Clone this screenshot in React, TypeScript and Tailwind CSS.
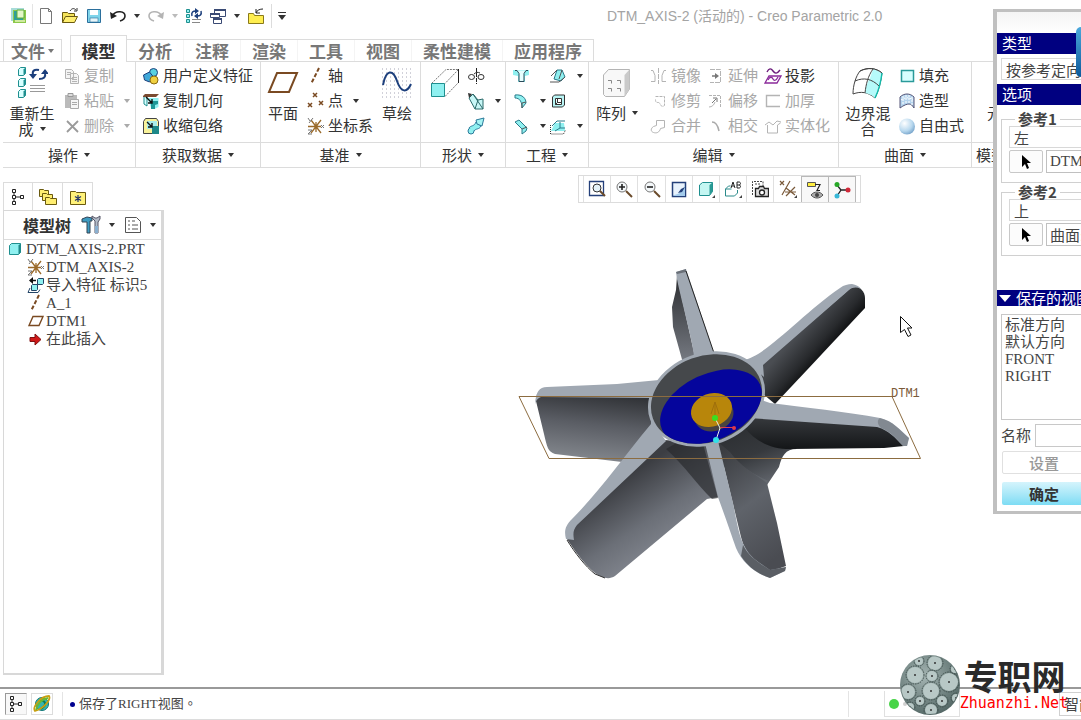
import type { ReactNode } from 'react';

const CY = '#8ff0f0';
const TEAL = '#1f8f8f';
const NAVY = '#1c3f7c';
const BROWN = '#7a4a22';
const GREY = '#b4b4b4';

interface SvgProps {
  w?: number;
  h?: number;
  box?: string;
  children: ReactNode;
}

function Svg({ w = 18, h = 18, box, children }: SvgProps) {
  return (
    <svg width={w} height={h} viewBox={box ?? `0 0 ${w} ${h}`} fill="none" className="shrink-0" aria-hidden="true">
      {children}
    </svg>
  );
}

function Caret({ color = '#333' }: { color?: string }) {
  return (
    <Svg w={6} h={4}>
      <path d="M0 0h6L3 4z" fill={color}/>
    </Svg>
  );
}

/* ---------- icons ---------- */

const icons = {
  logo: (
    <Svg>
      <path d="M1 1h13v2H3v11H1z" fill="#a8dcd8"/>
      <path d="M3 3h13v13H3z" fill="#8cc84a"/>
      <path d="M4 4h9v9H4z" fill="#2f9e9a"/>
      <path d="M7 3h7v8H7z" fill="#e4f6c8" stroke="#5fae3a"/>
      <path d="M5 13h10v2H5z" fill="#cfeaa0"/>
    </Svg>
  ),
  page: (
    <Svg>
      <path d="M3.500 1.500h8l3 3v12h-11z" fill="#fff" stroke="#777"/>
      <path d="M11.500 1.500v3h3" stroke="#777"/>
    </Svg>
  ),
  open: (
    <Svg>
      <path d="M1.500 15.500v-10h5l1 1h6v3" fill="#f4e35a" stroke="#6b5a10"/>
      <path d="M1.500 15.500l3-6h12l-3 6z" fill="#ffef70" stroke="#6b5a10"/>
      <path d="M9 4c2-3 4-3 6-1M16 1v3h-3" stroke="#333"/>
    </Svg>
  ),
  save: (
    <Svg>
      <path d="M2.500 2.500h13v13h-13z" fill="#7fd4ea" stroke="#2b6f9c"/>
      <rect x="5" y="3" width="8" height="5" fill="#fff"/>
      <rect x="5" y="11" width="8" height="4" fill="#e8f6fa" stroke="#2b6f9c" strokeWidth=".6"/>
    </Svg>
  ),
  undo: (
    <Svg>
      <path d="M4 8c3-5 12-4 12 1 0 2-2 4-5 5" stroke="#222" strokeWidth="1.600"/>
      <path d="M1 5l1 7 6-3z" fill="#222"/>
    </Svg>
  ),
  redo: (
    <Svg>
      <path d="M14 8C11 3 2 4 2 9c0 2 2 4 5 5" stroke={GREY} strokeWidth="1.600"/>
      <path d="M17 5l-1 7-6-3z" fill={GREY}/>
    </Svg>
  ),
  regen: (
    <Svg>
      <path d="M1.500 2.500h3v3h-3zM1.500 7.500h3v3h-3zM1.500 12.500h3v3h-3z" fill={CY} stroke={TEAL}/>
      <path d="M7 12.500h9M7 15.500h8" stroke="#888"/>
      <path d="M7 9c-1-4 1-5 4-5M16 4c1 4-1 5-4 5" stroke={NAVY} strokeWidth="1.500"/>
      <path d="M10 1l4 3-4 3zM13 12L9 9l4-3z" fill={NAVY}/>
    </Svg>
  ),
  windows: (
    <Svg>
      <path d="M5.500 2.500h11v7h-11z" fill="#fff" stroke="#3a4a74"/>
      <path d="M5 2h12v2H5z" fill="#3a4a74"/>
      <path d="M1.500 6.500h9v4h-9z" fill="#fff" stroke="#3a4a74"/>
      <path d="M1 6h10v2H1z" fill="#3a4a74"/>
      <path d="M4.500 11.500h8v5h-8z" fill="#fff" stroke="#3a4a74"/>
      <path d="M4 11h9v2H4z" fill="#3a4a74"/>
    </Svg>
  ),
  folder: (
    <Svg>
      <path d="M1.500 16.500v-10h5l1 2h9v8z" fill="#ffee50" stroke="#8a7a1a"/>
      <path d="M9 6c1-3 4-4 7-4M9 2v4h4" stroke="#222"/>
    </Svg>
  ),
  regenBig: (
    <Svg w={32} h={32}>
      {[1, 12, 23].map(y => (
        <g key={y}>
          <path d={`M2.500 ${y + 1.5}l2-2h5v6l-2 2h-5z`} fill="#d8ffff" stroke={TEAL}/>
          <path d={`M7.500 ${y + 7}v-5.500l2-2v6z`} fill={TEAL}/>
        </g>
      ))}
      <path d="M14 18.500h15M14 21.500h15M14 24.500h15" stroke="#999"/>
      <path d="M17 8c-1-4 1-6 6-5M29 6c1 4-1 6-6 6" stroke={NAVY} strokeWidth="2"/>
      <path d="M13 7h8l-4 5zM25 7h8l-4-5z" fill={NAVY}/>
    </Svg>
  ),
  copy: (
    <Svg>
      <path d="M2.500 2.500h6l2 2v7h-8zM7.500 6.500h6l2 2v8h-8z" fill="#f4f4f4" stroke={GREY}/>
      <path d="M9 10.500h5M9 12.500h5M9 14.500h5M4 5.500h4M4 7.500h3" stroke={GREY}/>
    </Svg>
  ),
  paste: (
    <Svg>
      <path d="M2 3h12v13H2z" fill="#bbb"/>
      <path d="M5 1.500h5v3H5z" fill="#ddd" stroke="#999"/>
      <path d="M7.500 7.500h8v9h-8z" fill="#f6f6f6" stroke="#aaa"/>
      <path d="M9 10.500h5M9 12.500h5" stroke="#aaa"/>
    </Svg>
  ),
  remove: (
    <Svg>
      <path d="M4 4l11 11M15 4L4 15" stroke="#9a9a9a" strokeWidth="1.800"/>
    </Svg>
  ),
  udf: (
    <Svg>
      <circle cx="11.500" cy="5.500" r="4" fill="#58d0e0" stroke={NAVY}/>
      <path d="M1.500 8l6-3 4 5-4 5-5-2z" fill="#3fa8d8" stroke={NAVY}/>
      <circle cx="12" cy="13" r="4" fill="#f0d040" stroke="#8a6a10"/>
    </Svg>
  ),
  copyGeom: (
    <Svg>
      <path d="M5.500 6h11v9l-4 2h-3z" fill={CY}/>
      <path d="M2 4h3v10l-3-2z" fill="#d8ffff" stroke={TEAL}/>
      <path d="M1 4l2-2h14l-3 3H1z" fill="#7a4a30"/>
      <path d="M9 9h7v3l-3 1v4H9z" fill="#1d9898"/>
      <path d="M4 5l6 6M10 7v4H6" stroke="#111" strokeWidth="1.400"/>
    </Svg>
  ),
  shrink: (
    <Svg>
      <path d="M1.500 4.500l2-3h11l2 3v12h-15z" fill="#f8f29a" stroke="#444"/>
      <path d="M5 4h10v8H5z" fill="#a8ecec"/>
      <path d="M10 9h7v8h-7z" fill="#1d8888"/>
      <path d="M5 5l5 5M10 6v4H6" stroke="#111" strokeWidth="1.400"/>
    </Svg>
  ),
  plane: (
    <Svg w={32} h={32}>
      <path d="M10 6h20l-8 19H2z" fill="#fff" stroke={BROWN} strokeWidth="2"/>
    </Svg>
  ),
  axis: (
    <Svg>
      <path d="M12 1L4 17" stroke={BROWN} strokeWidth="2" strokeDasharray="4 2"/>
    </Svg>
  ),
  points: (
    <Svg>
      <path d="M6 1l4 4m0-4L6 5M1 11l4 4m0-4l-4 4M12 9l4 4m0-4l-4 4" stroke={BROWN} strokeWidth="1.500"/>
    </Svg>
  ),
  csys: (
    <Svg>
      <path d="M1 9.500h13M4 3l10 13M14 3L4 16M9 5v10" stroke="#9a6a2a" strokeWidth="1.300"/>
      <path d="M1 1l2 3m3-3L2 6M1 13h4l-4 4h4M14 8l3 3m0-3l-3 3" stroke="#777"/>
    </Svg>
  ),
  sketch: (
    <Svg w={32} h={32}>
      {[2, 6, 10, 14, 18, 22, 26, 30].map(y => (
        <path key={y} d={`M1 ${y}h30`} stroke="#a4a4b4" strokeDasharray="1 3"/>
      ))}
      <path d="M2 18C5 2 12 2 16 14s10 12 14 3" stroke={NAVY} strokeWidth="2"/>
    </Svg>
  ),
  extrude: (
    <Svg w={32} h={32}>
      <path d="M2.500 16.500L17 2.500h12.500L16 16.500" stroke="#777" strokeDasharray="2 1"/>
      <path d="M16 29.500l13.500-14v-13" stroke="#777" strokeDasharray="2 1"/>
      <path d="M29.500 2v14" stroke="#222"/>
      <path d="M2.500 16.500h13v13h-13z" fill={CY} stroke={TEAL}/>
    </Svg>
  ),
  revolve: (
    <Svg>
      <path d="M9.500 1v16" stroke="#222" strokeDasharray="4 1"/>
      <ellipse cx="4.500" cy="10" rx="3" ry="2.500" stroke="#333"/>
      <ellipse cx="14" cy="10" rx="3" ry="2.500" stroke="#333"/>
      <path d="M7 7c2-2 4-2 6-1" stroke="#333"/>
    </Svg>
  ),
  sweep: (
    <Svg>
      <path d="M2 6l4-4 5 6 5-1v10H8z" fill="#c8f6f6" stroke="#2b6a6a"/>
      <path d="M8 17l3-9M16 17L6 2" stroke="#2b6a6a"/>
      <path d="M1 1l4 1-3 4z" fill="#333"/>
    </Svg>
  ),
  blend: (
    <Svg>
      <circle cx="4" cy="14" r="3" fill={CY} stroke="#2b7a9a"/>
      <path d="M2 11c2-3 5-1 7-6l5 4c-2 4-5 2-7 5" fill={CY} stroke="#2b7a9a"/>
      <path d="M9 3l8-2-2 8-5-2z" fill="#a6f4f4" stroke="#2b7a9a"/>
    </Svg>
  ),
  hole: (
    <Svg>
      <path d="M1 3h16v5l-4 1v6H6V9L1 8z" fill={CY}/>
      <path d="M3 3.500h2l2 3v8h5v-8l2-3h2" fill="#e6ffff" stroke="#2b4a5a"/>
    </Svg>
  ),
  draft: (
    <Svg>
      <path d="M5 12l3-9h5l3 7-4 4z" fill={CY} stroke="#2b7a8a"/>
      <path d="M2 9l6-6M13 3l-3 9M1 15h9l6-5" stroke="#555"/>
    </Svg>
  ),
  round: (
    <Svg>
      <path d="M3 3c8-1 11 4 11 8l-4 5c0-6-2-10-7-10z" fill={CY} stroke="#2b7a8a"/>
      <path d="M10 16v-5l4-1" stroke="#555"/>
    </Svg>
  ),
  shell: (
    <Svg>
      <path d="M3.500 5l2-2h10v10l-2 2h-10z" fill="#b8f4f4" stroke="#333"/>
      <path d="M6.500 6.500h6v6h-6zM6.500 12.500l2-2v-4M8.500 10.500h4" fill="#fff" stroke="#333"/>
    </Svg>
  ),
  chamfer: (
    <Svg>
      <path d="M3 5l4-2 8 8-1 3-4 3v-5z" fill={CY} stroke="#2b7a8a"/>
      <path d="M10 12l5-2" stroke="#555"/>
    </Svg>
  ),
  rib: (
    <Svg>
      <path d="M2 14l4-8h9l1 8z" fill={CY}/>
      <path d="M3 9l5-5h8M6 14l5-3V5M11 11h5" stroke="#2b7a8a"/>
      <path d="M1.500 8v9h13l2-4" stroke="#333" strokeDasharray="1 1"/>
    </Svg>
  ),
  pattern: (
    <Svg w={32} h={32}>
      <path d="M2.500 8l5-5.500h21V22l-5 7.500h-19l-2-2z" fill="#f8f8f8" stroke={GREY}/>
      <path d="M23.500 8l5-5.500V22l-5 7.500z" fill="#cacaca"/>
      <path d="M7 13.500h3.500v3M16 13.500h3.500v3M7 21.500h3.500v3M16 21.500h3.500v3" stroke="#888"/>
    </Svg>
  ),
  mirror: (
    <Svg>
      <path d="M8.500 1v16" stroke={GREY} strokeDasharray="5 1"/>
      <path d="M1 3.500h2l2 5v6M16 3.500h-2l-2 5v6M1 14.500h4M12 14.500h4" stroke={GREY}/>
    </Svg>
  ),
  trim: (
    <Svg>
      <path d="M5.500 4.500h9v9c-4 3-4-3-6-3s-3 0-3-3" stroke={GREY} strokeDasharray="3 1"/>
    </Svg>
  ),
  merge: (
    <Svg>
      <path d="M6.500 3.500h8v7l-4 1c-1 4-4 5-7 4s-3-4 0-6l3-1z" stroke={GREY}/>
    </Svg>
  ),
  extend: (
    <Svg>
      <path d="M3 2.500h10.500v13H3" stroke={GREY} strokeDasharray="5 1"/>
      <path d="M5 9h4" stroke="#777" strokeWidth="1.500"/>
      <path d="M8 6v6l4-3z" fill="#777"/>
    </Svg>
  ),
  offset: (
    <Svg>
      <path d="M2 3.500h11.500v12" stroke={GREY} strokeDasharray="3 1"/>
      <path d="M5 11l4-4M6 6h4v4" stroke="#777"/>
      <path d="M2 15c3 0 5-2 6-5" stroke={GREY}/>
    </Svg>
  ),
  intersect: (
    <Svg>
      <path d="M5 5c4 0 6 4 7 9" stroke="#aaa" strokeWidth="1.500"/>
    </Svg>
  ),
  project: (
    <Svg>
      <path d="M3 5c2-4 4-4 6-1s4 3 7-1" stroke="#6a1a7a" strokeWidth="1.400"/>
      <path d="M1 16l4-7h12l-4 7z" stroke="#8a2a9a" strokeWidth="1.300"/>
      <path d="M4 13c2-4 4-3 5-1s3 2 5-2" stroke="#8a2a9a" strokeWidth="1.300"/>
    </Svg>
  ),
  thicken: (
    <Svg>
      <path d="M16 3.500H2.500v11H16" stroke={GREY} strokeWidth="1.400"/>
    </Svg>
  ),
  solidify: (
    <Svg>
      <path d="M1 8l4-3 4 3 4-4 4 1M3.500 8v8h10V8l3-2" stroke={GREY}/>
    </Svg>
  ),
  boundary: (
    <Svg w={36} h={32}>
      <path d="M10 4c8-4 16-3 22 2-1 8-3 17-7 25-7-6-14-7-22-4 0-9 3-18 7-23z" fill="#fff" stroke="#444"/>
      <path d="M20 11L23 2c4 1 7 3 9 4-1 8-3 17-7 25-3-3-6-4-10-5 0-5 2-10 5-15z" fill="#b6fafa"/>
      <path d="M5 14c9-4 17-2 24 5M23 2c-5 7-7 15-8 24M10 4c8-4 16-3 22 2" stroke="#444"/>
      <path d="M32 6c-1 8-3 17-7 25" stroke="#1ba" strokeWidth="1.400"/>
    </Svg>
  ),
  fill: (
    <Svg>
      <path d="M3.500 3.500h12v11h-12z" fill="#d8ffff" stroke="#2a9a9a" strokeWidth="1.500"/>
    </Svg>
  ),
  style: (
    <Svg>
      <path d="M2 5c4-4 10-4 14 0v11c-2-3-3-4-5-4s-5 1-9 4z" fill="#b4d4ee" stroke="#557"/>
      <path d="M5 4v9M8 3v9M11 3v8M14 5v8M3 8c4-3 8-3 12 0" stroke="#fff" strokeDasharray="2 1"/>
    </Svg>
  ),
  freestyle: (
    <Svg>
      <defs>
        <radialGradient id="ball" cx=".35" cy=".3" r=".8">
          <stop offset="0" stopColor="#fff"/>
          <stop offset=".6" stopColor="#b8d8ee"/>
          <stop offset="1" stopColor="#6a9ac4"/>
        </radialGradient>
      </defs>
      <circle cx="9" cy="9.500" r="8" fill="url(#ball)"/>
    </Svg>
  ),
  tree: (
    <Svg>
      <path d="M3.500 1.500h3v3h-3zM3.500 7.500h3v3h-3zM3.500 13.500h3v3h-3zM11.500 7.500h3v3h-3zM5 5v2M5 11v2M7 9h4" stroke="#222"/>
    </Svg>
  ),
  folders: (
    <Svg>
      <path d="M.5 8.500v-7h4l1 1h4v6z" fill="#ffee70" stroke="#6a5a10"/>
      <path d="M3.500 12.500v-7h4l1 1h5v6z" fill="#ffee70" stroke="#6a5a10"/>
      <path d="M6.500 16.500v-7h4l1 1h6v6z" fill="#ffee70" stroke="#6a5a10"/>
    </Svg>
  ),
  favorites: (
    <Svg>
      <path d="M1.500 16.500v-13h5l1 1h9v12z" fill="#fff27a" stroke="#6a5a10"/>
      <path d="M9 7v7M6 8.500l6 4M12 8.500l-6 4" stroke="#24356a" strokeWidth="1.200"/>
    </Svg>
  ),
  tools: (
    <Svg w={20} h={20}>
      <path d="M1 4l5-2 5 1v3H9v12H6V7L1 7z" fill="#3c9ac0" stroke="#345"/>
      <path d="M14 9V6l-3-3V1l3 2h2l3-2v3l-2 3v11h-3z" fill="#b4bcc8" stroke="#556"/>
      <path d="M14 11h3v7h-3z" fill="#8ab0d0"/>
    </Svg>
  ),
  list: (
    <Svg>
      <path d="M1.500 1.500h11l4 4v11h-15z" fill="#fff" stroke="#555"/>
      <path d="M4 5h2M4 9h2M4 13h2M8 5h3M8 9h6M8 13h6" stroke="#555"/>
    </Svg>
  ),
  part: (
    <Svg w={14} h={14}>
      <path d="M1.500 3.500l2-2h9v9l-2 2h-9z" fill={CY} stroke={TEAL}/>
      <path d="M10.500 3.500l2-2v9l-2 2z" fill="#1d8888"/>
    </Svg>
  ),
  importFeat: (
    <Svg>
      <path d="M10.500 3.500l1-1h5v5l-1 1h-5zM4.500 9.500l1-1h5v5l-1 1h-5z" fill={CY} stroke="#246"/>
      <path d="M3 4.500h6" stroke="#111" strokeWidth="1.500"/>
      <path d="M6 1v7L2 4.500z" fill="#111"/>
      <path d="M3 12l-2 4.500h10l2-3" stroke="#246"/>
    </Svg>
  ),
  planeSmall: (
    <Svg>
      <path d="M6 4.500h10l-4 9H2z" stroke={BROWN} strokeWidth="1.400"/>
    </Svg>
  ),
  insert: (
    <Svg>
      <path d="M3 7.500h5V4l6 5.500L8 15v-3.500H3z" fill="#d01818" stroke="#801010"/>
    </Svg>
  ),
  globe: (
    <Svg>
      <circle cx="9" cy="9" r="6.500" fill="#35b4b0" stroke="#177"/>
      <path d="M6 5c2 1 5 0 6 3s-2 4-4 6" stroke="#0a7b60" strokeWidth="2"/>
      <path d="M2 16C-1 12 8 1 16 1c2 3-4 12-14 15z" stroke="#c8a010" strokeWidth="1.800"/>
      <path d="M3 15C4 9 9 4 15 3" stroke="#6cba30" strokeWidth="1.800"/>
    </Svg>
  ),
};

const viewIcons: { name: string; pressed?: boolean; icon: ReactNode }[] = [
  {
    name: '重新调整',
    icon: (
      <Svg>
        <path d="M1.500 1.500h14v14h-14z" fill="#fff" stroke="#24407a" strokeWidth="1.300"/>
        <circle cx="9" cy="8" r="4" fill="#e4f2f8" stroke="#333"/>
        <path d="M12 11l5 5" stroke="#6a4a2a" strokeWidth="2"/>
      </Svg>
    ),
  },
  {
    name: '放大',
    icon: (
      <Svg>
        <circle cx="7" cy="7" r="5" fill="#f4f8fa" stroke="#777"/>
        <path d="M4 7h6M7 4v6" stroke="#222" strokeWidth="1.600"/>
        <path d="M11 11l6 6" stroke="#6a4a2a" strokeWidth="2"/>
      </Svg>
    ),
  },
  {
    name: '缩小',
    icon: (
      <Svg>
        <circle cx="7" cy="7" r="5" fill="#f4f8fa" stroke="#777"/>
        <path d="M4 7h6" stroke="#222" strokeWidth="1.600"/>
        <path d="M11 11l6 6" stroke="#6a4a2a" strokeWidth="2"/>
      </Svg>
    ),
  },
  {
    name: '重画',
    icon: (
      <Svg>
        <path d="M2.500 2.500h13v14h-13z" fill="#e8f2fc" stroke="#24407a" strokeWidth="1.500"/>
        <path d="M4 15c6-1 10-5 11-11v12H4z" fill="#a4ccec"/>
        <path d="M8 13l3-4 4-2-3 5z" fill="#24407a"/>
      </Svg>
    ),
  },
  {
    name: '显示样式',
    icon: (
      <Svg>
        <path d="M2.500 5l3-2.500h10v9l-3 4h-10z" fill="#c4f6f2" stroke={TEAL}/>
        <path d="M12.500 5l3-2.500v9l-3 4z" fill="#2a9a94"/>
        <path d="M18 18v-3l-3 3z" fill="#444"/>
      </Svg>
    ),
  },
  {
    name: '已命名视图',
    icon: (
      <Svg>
        <path d="M1.500 9l3-3h2M1.500 9v7h9l3-3v-3M1.500 9h6" stroke="#2a8a8a"/>
        <path d="M7 8l2-6 2 6M8 6h2M13 2v6h2c2 0 2-3 0-3 2 0 2-3 0-3zM13 5h2" stroke="#222"/>
        <path d="M18 18v-3l-3 3z" fill="#444"/>
      </Svg>
    ),
  },
  {
    name: '视图管理器',
    icon: (
      <Svg>
        <path d="M1.500 15V1.500H12V6M4 4h5" stroke="#444" strokeDasharray="2 1"/>
        <path d="M4.500 8.500h3l1-2h4l1 2h4v8h-13z" fill="#ddd" stroke="#222" strokeWidth="1.300"/>
        <circle cx="11" cy="12.500" r="2.500" fill="#fff" stroke="#222" strokeWidth="1.300"/>
      </Svg>
    ),
  },
  {
    name: '基准显示',
    icon: (
      <Svg>
        <path d="M1 1l4 4m0-4L1 5M11 1L3 15M7 8l9 7m0-8l-9 9M6 12h11" stroke="#7a5a3a" strokeWidth="1.200"/>
        <path d="M18 18v-3l-3 3z" fill="#444"/>
      </Svg>
    ),
  },
  {
    name: '注释显示',
    pressed: true,
    icon: (
      <Svg>
        <path d="M1.500 1.500h8v4h-8z" fill="#ffee40" stroke="#555"/>
        <path d="M9 3.500h5l-3 6h3" stroke="#222" strokeWidth="1.200"/>
        <path d="M5 14c3-4 9-4 12 0-3 4-9 4-12 0z" fill="#aaa" stroke="#555"/>
        <circle cx="11" cy="14" r="2" fill="#444"/>
      </Svg>
    ),
  },
  {
    name: '旋转中心',
    pressed: true,
    icon: (
      <Svg>
        <path d="M4 4l4 5-4 6M8 9h7" stroke="#222" strokeWidth="1.300"/>
        <circle cx="4" cy="3.500" r="2.500" fill="#28a828"/>
        <circle cx="15" cy="9" r="2.500" fill="#d02838"/>
        <circle cx="4" cy="15" r="2.500" fill="#38b8d8"/>
      </Svg>
    ),
  },
];

/* ---------- ribbon pieces ---------- */

interface ToolProps {
  icon: ReactNode;
  label?: string;
  name?: string;
  disabled?: boolean;
  arrow?: boolean;
}

function Tool({ icon, label, name, disabled, arrow }: ToolProps) {
  return (
    <button
      disabled={disabled}
      aria-label={name}
      className="flex h-[25px] items-center gap-[3px] whitespace-nowrap text-[#333] disabled:text-[#a8a8a8]"
    >
      {icon}
      {label && <span>{label}</span>}
      {arrow && <span className="ml-[7px]"><Caret color={disabled ? '#aaa' : '#333'}/></span>}
    </button>
  );
}

interface BigToolProps {
  icon: ReactNode;
  label?: string;
  second?: string;
  name?: string;
  arrow?: boolean;
}

function BigTool({ icon, label, second, name, arrow }: BigToolProps) {
  return (
    <button aria-label={name} className="flex w-full flex-col items-center pt-1 leading-4">
      {icon}
      <span className="mt-[6px] flex items-center gap-[6px] whitespace-nowrap">
        {label}
        {arrow && !second && <Caret/>}
      </span>
      {second && (
        <span className="flex items-center gap-[6px]">
          {second}
          {arrow && <Caret/>}
        </span>
      )}
    </button>
  );
}

interface GroupProps {
  title: string;
  width: string;
  last?: boolean;
  children: ReactNode;
}

function Group({ title, width, last, children }: GroupProps) {
  return (
    <section className={`flex shrink-0 flex-col border-r border-[#dcdcdc] ${width}`}>
      <div className="flex h-[80px] pt-px">{children}</div>
      <button className={`flex h-[26px] items-center gap-[6px] whitespace-nowrap border-y border-[#dcdcdc] ${last ? 'pl-1' : 'justify-center'}`}>
        {title}
        {!last && <Caret/>}
      </button>
    </section>
  );
}

const tabs = ['分析', '注释', '渲染', '工具', '视图', '柔性建模', '应用程序'];

function TitleBar() {
  const btn = 'flex h-6 w-6 items-center justify-center';
  const drop = 'flex h-6 w-[14px] items-center justify-center';
  return (
    <header className="flex h-[35px] items-start pl-[7px] pt-1">
      <button aria-label="Creo" className={btn}>{icons.logo}</button>
      <div className="mx-px h-6 w-px bg-[#e4e4e4]"/>
      <button aria-label="新建" className={btn}>{icons.page}</button>
      <button aria-label="打开" className={btn}>{icons.open}</button>
      <button aria-label="保存" className={btn}>{icons.save}</button>
      <button aria-label="撤消" className={btn}>{icons.undo}</button>
      <button aria-label="撤消列表" className={drop}><Caret/></button>
      <button aria-label="重做" className={btn}>{icons.redo}</button>
      <button aria-label="重做列表" className={drop}><Caret color="#bbb"/></button>
      <button aria-label="重新生成" className={btn}>{icons.regen}</button>
      <button aria-label="窗口" className={btn}>{icons.windows}</button>
      <button aria-label="窗口列表" className={drop}><Caret/></button>
      <button aria-label="关闭" className={btn}>{icons.folder}</button>
      <div className="mx-[3px] h-6 w-px bg-[#dcdcdc]"/>
      <button aria-label="自定义" className={drop}>
        <Svg w={8} h={8}><path d="M0 .5h8" stroke="#333"/><path d="M0 3h8L4 8z" fill="#333"/></Svg>
      </button>
      <h1 className="ml-[318px] whitespace-nowrap font-['Liberation_Sans','Noto_Sans_CJK_SC',sans-serif] text-[14px] leading-6 text-[#a4a4a4]">
        DTM_AXIS-2 (活动的) - Creo Parametric 2.0
      </h1>
    </header>
  );
}

function Tabs() {
  return (
    <nav className="flex items-end border-b border-[#dcdcdc] pl-[3px] text-[17px] font-semibold leading-[21px] text-[#777]">
      <button className="mr-[8px] flex h-[22px] w-[59px] items-center justify-center gap-[3px] border border-b-0 border-[#dcdcdc]">
        文件<Caret color="#777"/>
      </button>
      <button className="-mb-px h-[27px] w-[57px] border border-b-0 border-[#dcdcdc] bg-white pt-[3px] font-bold text-[#333]">模型</button>
      <div className="flex h-[22px] border-r border-t border-[#dcdcdc]">
        {tabs.map(t => (
          <button key={t} className="whitespace-nowrap border-r border-[#f4f4f4] px-[11px] last:border-r-0">{t}</button>
        ))}
      </div>
    </nav>
  );
}

function Ribbon() {
  return (
    <div className="flex pl-[3px] text-[15px] text-[#333]">
      <Group title="操作" width="w-[133px]">
        <div className="ml-[3px] w-[52px]"><BigTool icon={icons.regenBig} label="重新生" second="成" arrow/></div>
        <div className="ml-[5px]">
          <Tool icon={icons.copy} label="复制" disabled/>
          <Tool icon={icons.paste} label="粘贴" disabled arrow/>
          <Tool icon={icons.remove} label="删除" disabled arrow/>
        </div>
      </Group>
      <Group title="获取数据" width="w-[125px]">
        <div className="ml-[6px]">
          <Tool icon={icons.udf} label="用户定义特征"/>
          <Tool icon={icons.copyGeom} label="复制几何"/>
          <Tool icon={icons.shrink} label="收缩包络"/>
        </div>
      </Group>
      <Group title="基准" width="w-[160px]">
        <div className="ml-1 w-[36px]"><BigTool icon={icons.plane} label="平面"/></div>
        <div className="ml-[6px] w-[70px]">
          <Tool icon={icons.axis} label="轴"/>
          <Tool icon={icons.points} label="点" arrow/>
          <Tool icon={icons.csys} label="坐标系"/>
        </div>
        <div className="w-[40px]"><BigTool icon={icons.sketch} label="草绘"/></div>
      </Group>
      <Group title="形状" width="w-[85px]">
        <div className="ml-1 w-[40px]"><BigTool icon={icons.extrude} name="拉伸"/></div>
        <div className="ml-[2px]">
          <Tool icon={icons.revolve} name="旋转"/>
          <Tool icon={icons.sweep} name="扫描" arrow/>
          <Tool icon={icons.blend} name="扫描混合"/>
        </div>
      </Group>
      <Group title="工程" width="w-[83px]">
        <div className="ml-[6px] w-[37px]">
          <Tool icon={icons.hole} name="孔"/>
          <Tool icon={icons.round} name="倒圆角" arrow/>
          <Tool icon={icons.chamfer} name="倒角" arrow/>
        </div>
        <div>
          <Tool icon={icons.draft} name="拔模" arrow/>
          <Tool icon={icons.shell} name="壳"/>
          <Tool icon={icons.rib} name="筋" arrow/>
        </div>
      </Group>
      <Group title="编辑" width="w-[250px]">
        <div className="ml-[2px] w-[52px]"><BigTool icon={icons.pattern} label="阵列" arrow/></div>
        <div className="ml-[7px] w-[57px]">
          <Tool icon={icons.mirror} label="镜像" disabled/>
          <Tool icon={icons.trim} label="修剪" disabled/>
          <Tool icon={icons.merge} label="合并" disabled/>
        </div>
        <div className="w-[57px]">
          <Tool icon={icons.extend} label="延伸" disabled/>
          <Tool icon={icons.offset} label="偏移" disabled/>
          <Tool icon={icons.intersect} label="相交" disabled/>
        </div>
        <div>
          <Tool icon={icons.project} label="投影"/>
          <Tool icon={icons.thicken} label="加厚" disabled/>
          <Tool icon={icons.solidify} label="实体化" disabled/>
        </div>
      </Group>
      <Group title="曲面" width="w-[133px]">
        <div className="ml-[3px] w-[52px]"><BigTool icon={icons.boundary} label="边界混" second="合"/></div>
        <div className="ml-1">
          <Tool icon={icons.fill} label="填充"/>
          <Tool icon={icons.style} label="造型"/>
          <Tool icon={icons.freestyle} label="自由式"/>
        </div>
      </Group>
      <Group title="模型" width="min-w-[70px] flex-1" last>
        <div className="ml-[15px] mt-[42px] leading-4">元</div>
      </Group>
    </div>
  );
}

/* ---------- model tree ---------- */

const treeRows = [
  { icon: icons.csys, label: 'DTM_AXIS-2' },
  { icon: icons.importFeat, label: '导入特征 标识5' },
  { icon: icons.axis, label: 'A_1' },
  { icon: icons.planeSmall, label: 'DTM1' },
  { icon: icons.insert, label: '在此插入' },
];

function Sidebar() {
  return (
    <aside className="mb-3 ml-[3px] mt-[14px] flex w-[161px] shrink-0 flex-col">
      <div className="flex">
        <button aria-label="模型树" className="-mb-px flex h-[29px] w-[30px] items-center justify-center border border-b-0 border-[#dcdcdc] bg-white">{icons.tree}</button>
        <button aria-label="文件夹浏览器" className="flex h-[28px] w-[30px] items-center justify-center border-r border-t border-[#dcdcdc]">{icons.folders}</button>
        <button aria-label="收藏夹" className="flex h-[28px] w-[30px] items-center justify-center border-r border-t border-[#dcdcdc]">{icons.favorites}</button>
      </div>
      <div className="flex-1 border-b-2 border-l border-r-[3px] border-t border-[#d8d8d8]">
        <div className="flex h-[29px] items-center border-b border-[#dcdcdc] pl-[19px]">
          <h2 className="mr-[10px] text-[16px] font-bold leading-5 text-[#333]">模型树</h2>
          <button aria-label="设置" className="flex items-center gap-2">{icons.tools}<Caret/></button>
          <button aria-label="显示" className="ml-[9px] flex items-center gap-2">{icons.list}<Caret/></button>
        </div>
        <ul className="font-['Liberation_Serif','Noto_Sans_CJK_SC',serif] text-[15px] leading-[18px] text-[#444]">
          <li>
            <span className="flex h-[18px] items-center gap-1 whitespace-nowrap pl-1">{icons.part}DTM_AXIS-2.PRT</span>
            <ul className="pl-[23px]">
              {treeRows.map(r => (
                <li key={r.label} className="flex h-[18px] items-center gap-px whitespace-nowrap">{r.icon}{r.label}</li>
              ))}
            </ul>
          </li>
        </ul>
      </div>
    </aside>
  );
}

/* ---------- graphics area ---------- */

function Model() {
  return (
    <svg viewBox="164 203 917 484" className="min-h-0 w-full flex-1" role="img" aria-label="DTM_AXIS-2">
      <defs>
        <linearGradient id="left" x1=".6" y1="0" x2=".4" y2="1">
          <stop offset="0" stopColor="#303236"/>
          <stop offset=".45" stopColor="#5a5d64"/>
          <stop offset="1" stopColor="#85898f"/>
        </linearGradient>
        <linearGradient id="lowLeft" x1=".35" y1=".3" x2=".75" y2=".85">
          <stop offset="0" stopColor="#3c3e43"/>
          <stop offset=".5" stopColor="#6b6f77"/>
          <stop offset="1" stopColor="#8b8f98"/>
        </linearGradient>
        <linearGradient id="top" x1="0" y1="0" x2="0" y2="1">
          <stop offset="0" stopColor="#2c2e31"/>
          <stop offset="1" stopColor="#777b83"/>
        </linearGradient>
        <linearGradient id="upRight" x1=".38" y1=".38" x2=".62" y2=".62">
          <stop offset="0" stopColor="#4a4d52"/>
          <stop offset=".6" stopColor="#282a2d"/>
          <stop offset="1" stopColor="#08090a"/>
        </linearGradient>
        <linearGradient id="right" x1="0" y1="0" x2="0" y2="1">
          <stop offset="0" stopColor="#3a3d41"/>
          <stop offset="1" stopColor="#141618"/>
        </linearGradient>
        <linearGradient id="lowRight" x1=".2" y1="0" x2=".6" y2="1">
          <stop offset="0" stopColor="#3a3c40"/>
          <stop offset=".5" stopColor="#5f636a"/>
          <stop offset="1" stopColor="#4a4c52"/>
        </linearGradient>
        <linearGradient id="hub" x1=".2" y1="0" x2=".7" y2="1">
          <stop offset="0" stopColor="#26282b"/>
          <stop offset=".6" stopColor="#36393d"/>
          <stop offset="1" stopColor="#63676e"/>
        </linearGradient>
        <clipPath id="bore">
          <ellipse cx="706.500" cy="399" rx="57" ry="43" transform="rotate(-20 706.500 399)"/>
        </clipPath>
      </defs>

      {/* blades behind the hub */}
      <path d="M677 276l-1 14-4 17 1 20 10 36 12-6z" fill="url(#top)"/>
      <path d="M676 272l10-3 28 84-20 6c1-10-12-55-17-80z" fill="#a0a8b2"/>
      <path d="M676 272l10-3v3l-9 2z" fill="#6a7078"/>
      <path d="M686 271l28 82" stroke="#222"/>
      <path d="M760 366L846 292l7-6c7 0 12 6 12 12v10l-58 62-32 34-12-10z" fill="url(#upRight)"/>
      <path d="M744 360c22-4 58-46 96-72 4-3 8-4 12-4 4 1 7 2 9 5-4-2-8-2-12 1l-86 75 1 12z" fill="#a0a8b2"/>

      {/* hub body */}
      <path d="M700 440l55-28 42 37c-12 0-15 7-18 18l-12 18-12-5-33-14z" fill="url(#hub)"/>
      <path d="M727 454c12 16 28 24 40 29" stroke="#74787f" strokeWidth="5" fill="none" opacity=".35"/>
      <path d="M752 414l125 12c13 3 19 12 27 20l-20 2-94 1c-20 0-35-8-46-22z" fill="url(#right)"/>
      <path d="M756 398l14 5c32 4 78 9 110 15 13 3 20 12 29 20l-2 8h-4c-9-9-13-15-26-19L748 418z" fill="#a0a8b2"/>
      <path d="M880 418c13 3 20 12 29 20l-2 8h-4c-7-8-12-14-22-18-4-4-4-8-1-10z" fill="#6e747b" opacity=".6"/>

      <path d="M718 442l12 10c12 16 25 22 37 31l10 40 9 43-14 5c-14-4-26-14-31-34z" fill="url(#lowRight)"/>
      <path d="M700 446l18-5 15 62c4 20 6 34 12 44 6 12 17 17 25 23l16-3-1 4-15 7c-16-5-28-16-34-30-6-17-16-47-26-71z" fill="#a0a8b2"/>
      <path d="M743 545c6 12 16 18 27 25l16-3-1 4-15 7c-12-4-22-11-29-22z" fill="#3c3f43" opacity=".7"/>

      <path d="M537 394l115 3 4 31-34 34-67-8c-7-2-8-7-11-20l-8-33z" fill="url(#left)"/>
      <path d="M535 404c1-12 4-17 12-17l70-3 42-4-8 22-2-4-108-1c-3 1-5 3-6 7z" fill="#a0a8b2"/>

      <path d="M664 440l41 3 13 54-11 2-92 77c-6 4-13 2-20-3-12-10-20-22-28-34l7-13z" fill="url(#lowLeft)"/>
      <path d="M680 441l23 3 15 54-6 1c-15-14-26-32-46-50z" fill="#26282b" opacity=".65"/>
      <path d="M651 420l15 21-89 84c-4 5-4 9-3 15l-8-1c-2-8-1-13 6-20 27-27 50-60 79-95z" fill="#a0a8b2"/>
      <path d="M567 540c8 13 18 26 28 34l10 4" stroke="#333" fill="none"/>

      {/* hub ring and bore */}
      <ellipse cx="706.500" cy="399" rx="60" ry="46" fill="#a0a8b2" transform="rotate(-20 706.500 399)"/>
      <ellipse cx="706.500" cy="399" rx="57" ry="43" fill="#45484b" transform="rotate(-20 706.500 399)"/>
      <g clipPath="url(#bore)">
        <ellipse cx="711" cy="407" rx="54" ry="33" fill="#05059c" transform="rotate(-25 711 407)"/>
        <ellipse cx="714" cy="415" rx="20" ry="16" fill="#4a4440" transform="rotate(-20 714 415)"/>
        <ellipse cx="711.500" cy="410" rx="21" ry="16.500" fill="#b8860b" transform="rotate(-20 711.500 410)"/>
      </g>
      <path d="M711 414l4-12 4 12M715 402v16" stroke="#a0700c" fill="none"/>

      {/* datum plane */}
      <path d="M519 396.500h373l28.500 62H549z" fill="none" stroke="#8c6c40"/>
      <text x="891" y="397" fontSize="12" fontFamily="Liberation Mono, monospace" fill="#7a5a38">DTM1</text>

      {/* spin center */}
      <path d="M715 418l5 10-4 12" stroke="#e8f4e8" fill="none"/>
      <path d="M720 427.500h14" stroke="#d84050"/>
      <circle cx="715" cy="418" r="3" fill="#38e020"/>
      <circle cx="734" cy="428" r="2" fill="#e03848"/>
      <circle cx="716" cy="440" r="3" fill="#30e0e8"/>

      {/* pointer */}
      <path d="M900.500 316.500v16l4-3 3.500 7 3-1.500-3.500-7h4.500z" fill="#fff" stroke="#111"/>
    </svg>
  );
}

function Viewport() {
  return (
    <main className="flex min-w-0 flex-1 flex-col">
      <div role="toolbar" className="mr-[220px] mt-[7px] flex h-[28px] w-[283px] shrink-0 self-end border border-[#dcdcdc] px-1">
        {viewIcons.map(v => (
          <button
            key={v.name}
            aria-label={v.name}
            className={`flex flex-1 items-center justify-center border-l last:border-r ${v.pressed ? 'border-t border-[#b8b8b8] bg-[#f8f8f8]' : 'border-[#e0e0e0]'}`}
          >
            {v.icon}
          </button>
        ))}
      </div>
      <Model/>
    </main>
  );
}

/* ---------- orientation dialog ---------- */

function Picker({ title, direction, value, id }: { title: string; direction: string; value: string; id: string }) {
  return (
    <fieldset className="mb-[2px] ml-1 h-[71px] border border-r-0 border-[#d0d0d0] pl-[7px]">
      <legend className="ml-[6px] px-[3px] text-[15px] font-semibold leading-[14px]">{title}</legend>
      <select aria-label={`${title}方向`} className="block h-[22px] w-full appearance-none border border-r-0 border-[#d8d8d8] bg-white pl-1">
        <option>{direction}</option>
      </select>
      <div className="mt-[2px] flex gap-[3px]">
        <button aria-label={`选择${title}`} className="flex h-[23px] w-[34px] shrink-0 items-center justify-center rounded-[2px] border border-[#c8c8c8] bg-[#fcfcfc]">
          <Svg w={12} h={16}><path d="M2 1v12l3-3 2 5 2-1-2-5h4z" fill="#000"/></Svg>
        </button>
        <input
          id={id}
          aria-label={title}
          defaultValue={value}
          className="h-[23px] w-[90px] shrink-0 border border-[#c0c0c0] pl-[3px] font-['Liberation_Serif','Noto_Sans_CJK_SC',serif]"
        />
      </div>
    </fieldset>
  );
}

function OrientDialog() {
  return (
    <div
      role="dialog"
      aria-label="方向"
      className="absolute right-0 top-[9px] w-[88px] overflow-hidden border-b-[3px] border-l-4 border-t-[3px] border-[#c0c0c0] bg-white pb-[6px] text-[15px] text-[#444]"
    >
      <div className="h-[21px] bg-gradient-to-b from-[#f4f4f4] to-white"/>
      <label htmlFor="type" className="block h-[21px] bg-[#000080] pl-[5px] leading-[20px] text-white">类型</label>
      <select id="type" className="ml-1 mt-1 block h-[22px] w-full appearance-none border border-[#d8d8d8] bg-white pl-1">
        <option>按参考定向</option>
      </select>
      <h3 className="mb-[7px] mt-1 h-[21px] bg-[#000080] pl-[5px] leading-[20px] text-white">选项</h3>
      <Picker title="参考1" direction="左" value="DTM1:F4" id="ref1"/>
      <Picker title="参考2" direction="上" value="曲面:F5" id="ref2"/>
      <button className="mt-[34px] flex h-4 w-full items-center gap-[5px] whitespace-nowrap bg-[#000080] pl-[2px] leading-4 text-white">
        <Svg w={12} h={7}><path d="M0 0h12L6 7z" fill="#fff"/></Svg>
        保存的视图
      </button>
      <ul
        role="listbox"
        aria-label="保存的视图"
        className="ml-1 mt-2 h-[106px] whitespace-nowrap border border-r-0 border-[#c8c8c8] pl-[3px] pt-[2px] font-['Liberation_Serif','Noto_Sans_CJK_SC',serif] leading-[17px]"
      >
        {['标准方向', '默认方向', 'FRONT', 'RIGHT'].map(v => (
          <li key={v} role="option" aria-selected="false">{v}</li>
        ))}
      </ul>
      <div className="mt-1 flex items-center gap-1 pl-1">
        <label htmlFor="view" className="shrink-0">名称</label>
        <input id="view" className="h-[23px] w-[90px] shrink-0 border border-[#c8c8c8]"/>
      </div>
      <button disabled className="ml-[5px] mt-1 block h-[23px] w-[84px] rounded-[2px] border border-[#e0e0e0] font-medium leading-[20px] text-[#999]">设置</button>
      <button className="ml-[5px] mt-2 block h-[23px] w-[84px] rounded-[2px] bg-gradient-to-b from-[#d4f4fc] to-[#7cdcf4] font-semibold leading-[22px] text-[#333]">确定</button>
      <div className="absolute right-0 top-[15px] h-[50px] w-[5px] rounded-l-[5px] bg-gradient-to-b from-[#4aa8dc] to-[#0a5a9c]"/>
    </div>
  );
}

/* ---------- bottom ---------- */

const gears = [
  [15, 20, 8], [35, 8, 7], [19, 6, 4], [49, 27, 9], [31, 36, 8], [8, 37, 7], [32, 21, 5], [20, 46, 4], [42, 46, 5], [55, 14, 4], [56, 43, 4], [31, 55, 6], [10, 52, 4],
];

function Watermark() {
  return (
    <div className="absolute bottom-[5px] right-[13px] flex items-center">
      <Svg w={60} h={60}>
        <defs>
          <radialGradient id="sphere" cx=".4" cy=".35" r=".7">
            <stop offset="0" stopColor="#a4b4b2"/>
            <stop offset="1" stopColor="#526664"/>
          </radialGradient>
          <clipPath id="disc"><circle cx="30" cy="30" r="29"/></clipPath>
        </defs>
        <circle cx="30" cy="30" r="30" fill="url(#sphere)"/>
        <g clipPath="url(#disc)">
          {gears.map(([x, y, r]) => (
            <g key={`${x}-${y}`}>
              <circle cx={x} cy={y} r={r + 1} stroke="#40504e" strokeDasharray="1.500 1"/>
              <circle cx={x} cy={y} r={r} fill="#b8c8c6"/>
              <circle cx={x} cy={y} r="1" fill="#333"/>
            </g>
          ))}
        </g>
      </Svg>
      <div className="flex flex-col items-start whitespace-nowrap">
        <span className="pl-1 text-[34px] font-bold leading-[36px] text-[#2a2a2a]">专职网</span>
        <span className="font-['DejaVu_Sans_Mono',monospace] text-[15px] leading-[18px] text-[#f00]">Zhuanzhi.Net</span>
      </div>
    </div>
  );
}

function StatusBar() {
  return (
    <footer className="relative flex h-[33px] shrink-0 items-stretch border-t-2 border-[#999]">
      <div className="flex w-full items-center border-b border-[#dcdcdc] pl-[5px]">
        <button aria-label="导航器" className="flex h-[22px] w-[22px] items-center justify-center border border-[#999] border-b-[#e0e0e0] border-r-[#e0e0e0] bg-[#f8f8f8]">{icons.tree}</button>
        <button aria-label="浏览器" className="ml-1 flex h-[22px] w-[22px] items-center justify-center border border-[#dcdcdc]">{icons.globe}</button>
        <div className="ml-[9px] h-6 w-px bg-[#e4e4e4]"/>
        <p className="ml-[7px] flex items-center gap-1 whitespace-nowrap text-[13px] leading-5 text-[#444]">
          <span className="h-[5px] w-[5px] rounded-full bg-[#000090]"/>
          <span className="font-['Liberation_Serif','Noto_Sans_CJK_TC',serif]">保存了RIGHT视图。</span>
        </p>
        <div className="ml-auto flex h-[26px] w-[233px] items-center border-l border-[#e4e4e4] pl-[35px]">
          <div className="flex h-full w-[76px] items-center gap-1 border-x border-b border-[#e0e0e0] pl-1">
            <span className="h-[10px] w-[10px] rounded-full bg-[#48d448]"/>
            <span className="h-1 w-1 rounded-full bg-[#d0d0d0]"/>
          </div>
          <button className="ml-auto h-6 w-[22px] overflow-hidden whitespace-nowrap border border-r-0 border-[#d0d0d0] pl-[4px] text-left text-[15px] leading-5 text-[#444]">智能</button>
        </div>
      </div>
      <Watermark/>
    </footer>
  );
}

export default function App() {
  return (
    <div className="relative flex min-h-screen flex-col overflow-hidden bg-white font-['Noto_Sans_CJK_SC',sans-serif]">
      <TitleBar/>
      <Tabs/>
      <Ribbon/>
      <div className="flex flex-1">
        <Sidebar/>
        <Viewport/>
      </div>
      <StatusBar/>
      <OrientDialog/>
    </div>
  );
}
